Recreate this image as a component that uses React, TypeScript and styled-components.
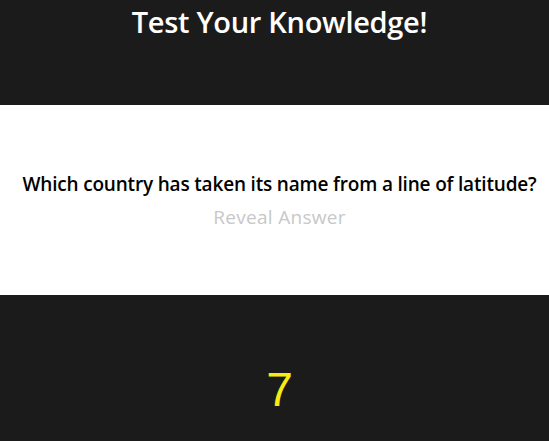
import React from "react";
import styled, { createGlobalStyle } from "styled-components";

const Global = createGlobalStyle`
  html, body { margin: 0; padding: 0; background: #1b1b1b; }
  body { font-family: "Open Sans", "Noto Sans", sans-serif; }
`;

const Page = styled.div`
  display: flex;
  flex-direction: column;
  min-height: 441px;
  background: #1b1b1b;
`;

const Header = styled.header`
  height: 105px;
  display: flex;
  justify-content: center;
  align-items: flex-start;
  padding-left: 10px;
`;

const Title = styled.h1`
  margin: 0;
  padding-top: 2px;
  color: #ffffff;
  font-size: 29px;
  font-weight: 600;
  line-height: 40px;
  letter-spacing: -0.3px;
`;

const Card = styled.section`
  height: 190px;
  background: #ffffff;
  display: flex;
  flex-direction: column;
  align-items: center;
  justify-content: center;
  padding-left: 10px;
`;

const Question = styled.h2`
  margin: 0;
  color: #000000;
  font-size: 19px;
  font-weight: 600;
  line-height: 30px;
  letter-spacing: -0.18px;
`;

const Reveal = styled.button`
  border: none;
  background: none;
  padding: 0;
  margin-top: 4px;
  font-family: inherit;
  color: #c8c8c8;
  font-size: 19px;
  line-height: 28px;
  letter-spacing: 0.3px;
  cursor: pointer;
`;

const Footer = styled.div`
  flex: 1;
  display: flex;
  justify-content: center;
  padding-top: 67px;
  padding-left: 10px;
`;

const Counter = styled.span`
  font-family: "Liberation Sans", Arial, sans-serif;
  color: #f7ec13;
  font-size: 48px;
  line-height: 56px;
`;

export default function App() {
  return (
    <Page>
      <Global />
      <Header>
        <Title>Test Your Knowledge!</Title>
      </Header>
      <Card>
        <Question>Which country has taken its name from a line of latitude?</Question>
        <Reveal>Reveal Answer</Reveal>
      </Card>
      <Footer>
        <Counter>7</Counter>
      </Footer>
    </Page>
  );
}
